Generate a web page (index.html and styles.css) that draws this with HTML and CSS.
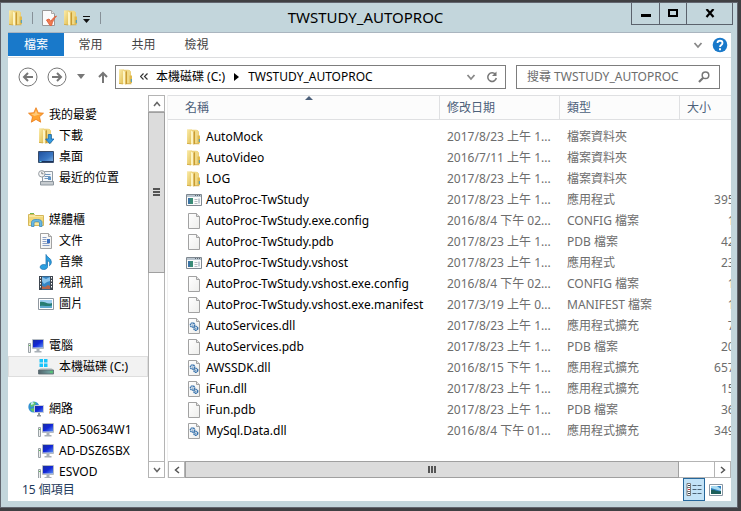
FILE: index.html
```html
<!DOCTYPE html>
<html lang="zh-Hant">
<head>
<meta charset="utf-8">
<title>TWSTUDY_AUTOPROC</title>
<link rel="stylesheet" href="styles.css">
</head>
<body>
<svg class="sprite" aria-hidden="true">
  <defs>
    <linearGradient id="gold" x1="0" x2="1" y1="0" y2="1"><stop offset="0" stop-color="#fbecaa"/><stop offset="1" stop-color="#e0bd50"/></linearGradient>
    <linearGradient id="paper" x1="0" x2="1" y1="0" y2="1"><stop offset="0" stop-color="#fff"/><stop offset="1" stop-color="#eeeeec"/></linearGradient>
    <linearGradient id="screen" x1="0" x2="1" y1="0" y2="1"><stop offset="0" stop-color="#1a2f9c"/><stop offset=".5" stop-color="#1226d8"/><stop offset="1" stop-color="#5c8ff0"/></linearGradient>
    <linearGradient id="desk" x1="0" x2="1" y1="0" y2="1"><stop offset="0" stop-color="#1f4f9c"/><stop offset=".6" stop-color="#3b78c4"/><stop offset="1" stop-color="#8ab8e4"/></linearGradient>
    <linearGradient id="steel" x1="0" x2="1" y1="0" y2="0"><stop offset="0" stop-color="#53636b"/><stop offset=".7" stop-color="#6d9c9c"/><stop offset="1" stop-color="#5fae86"/></linearGradient>
  </defs>
  <symbol id="folder" viewBox="0 0 16 16"><path d="M1 .8h9.500l2.500 1.700V15H1z" fill="#ecd07a"/><path d="M1 .5h5v14.200L1 14z" fill="url(#gold)"/><path d="M5 1.500 7.500 3v12.800L5 14.500z" fill="#fdf4c4"/><path d="M7.500 3 9 2v13l-1.500.8z" fill="#c99b31"/><path d="M9 1h3v13.500H9z" fill="#f0d987"/><path d="M11.500 6.500h2.500V14h-2.500z" fill="#e0b94c"/><path d="M13.300 10v3" stroke="#3d9bd0" stroke-width="1"/><path d="M1 14.300 5 15m4-.2h4.500" stroke="#c9a13a" stroke-width=".7"/></symbol>
  <symbol id="doc" viewBox="0 0 16 16"><path d="M2.500.5h8l3 3v12h-11z" fill="url(#paper)" stroke="#a2a2a2"/><path d="M10.500.5v3h3" fill="#e4e4e4" stroke="#a2a2a2"/></symbol>
  <symbol id="dll" viewBox="0 0 16 16"><use href="#doc"/><g fill="none" stroke="#3973ad" stroke-width="1.500"><circle cx="6.500" cy="7" r="2.100" stroke-dasharray="1.500 .4"/><circle cx="9.800" cy="10.300" r="1.900" stroke-dasharray="1.500 .4"/></g><circle cx="6.500" cy="7" r=".6" fill="#3973ad"/><circle cx="9.800" cy="10.300" r=".6" fill="#3973ad"/></symbol>
  <symbol id="app" viewBox="0 0 16 16"><path d="M.5 2.500h15v11H.5z" fill="#fbfbfb" stroke="#7f8890"/><path d="M1 3h14v2H1z" fill="#b9c5cf"/><path d="M9 3.500h1m1 0h1m1 0h1" stroke="#5d6872"/><path d="M2 6h5v6H2z" fill="#3b8c77"/><path d="M2 6h2v6H2z" fill="#3a73a3"/><path d="M8.500 7.500h3m-3 2h3m-3 2h3" stroke="#b6bcc1"/><path d="M13 6.500v5" stroke="#8ba0b1"/></symbol>
  <symbol id="star" viewBox="0 0 16 16"><path d="m8 .7 2.200 5 5.300.5-4 3.600 1.200 5.400L8 12.400l-4.700 2.800 1.200-5.400-4-3.600 5.300-.5z" fill="#ffa32f" stroke="#ea7b1b" stroke-width=".8"/><path d="m8 3 1.500 3.700 3.500.4-6.500 2L3 7l3.500-.4z" fill="#ffc978"/></symbol>
  <symbol id="download" viewBox="0 0 16 16"><use href="#folder"/><path d="M10.300 6.500h3v4.500H16l-4.200 4.700L7.600 11h2.700z" fill="#359be0" stroke="#1766ad" stroke-width=".8"/></symbol>
  <symbol id="desktop" viewBox="0 0 16 16"><path d="M.5 2.500h15v11H.5z" fill="url(#desk)" stroke="#374b6a"/><path d="M1 12.500h14" stroke="#18325c"/><path d="M1.500 12.500h2" stroke="#63d0e8"/></symbol>
  <symbol id="recent" viewBox="0 0 16 16"><path d="M4.500 1.500h10v10h-10z" fill="#f4f7fa" stroke="#929ba3"/><path d="M6.500 4.500h6m-6 2h6m-6 2h4" stroke="#7196bd"/><path d="M10 7h3v3h-3z" fill="#5b93c8"/><path d="M2.500 11.500h13v3.500h-13z" fill="#c6cbcf" stroke="#8d969e"/><circle cx="3.800" cy="3.800" r="3.200" fill="#f5f5f5" stroke="#969ca2"/><path d="M3.800 1.800v2h1.700" fill="none" stroke="#5e656b" stroke-width=".8"/></symbol>
  <symbol id="library" viewBox="0 0 16 16"><path d="M.5 2.500h6l1 1h8v10H.5z" fill="#f7e7a0" stroke="#d4b75a"/><path d="M2 1.500h4" stroke="#72b44c"/><path d="M1 5h14v6H1z" fill="#f2d778"/><path d="M3.500 14.500v-4c0-2 1.500-3 4.500-3h1.500c3 0 4.500 1 4.500 3v4h-2.500V11c0-.8-.8-1.300-2.700-1.300S6 10.200 6 11v3.500z" fill="#68b9e4" stroke="#3c89bd" stroke-width=".8"/></symbol>
  <symbol id="text" viewBox="0 0 16 16"><use href="#doc"/><path d="M4.500 4.500h4m-4 2h4m-4 2h4m-4 2h7m-7 2h7" stroke="#8a9fc4"/><path d="M9 6h3v4H9z" fill="#396fc0"/></symbol>
  <symbol id="music" viewBox="0 0 16 16"><path d="M8 .5c.5 2.800 5.500 3.500 5.300 7.500 0 1.800-1 3.200-1.800 3.700.8-2.700-.2-4.500-2-5.200v6.300c0 1.600-1.700 2.700-3.900 2.700-2 0-3.400-1-3.400-2.400 0-1.500 1.500-2.600 3.500-2.600.8 0 1.600.2 2.300.6z" fill="#2ba0e1" stroke="#2075b2" stroke-width=".8"/></symbol>
  <symbol id="video" viewBox="0 0 16 16"><path d="M1 1h14v14H1z" fill="#3e4650"/><path d="M4 1.500h8v13H4z" fill="#3585c4"/><path d="m4 2 4 2 4-2v4l-3 1-3 2-2-3z" fill="#8bc4ec"/><path d="m4 11 3 1 3-2 2 1v3H4z" fill="#b8654a"/><path d="M2.500 2v12m11-12v12" stroke="#fff" stroke-width="1" stroke-dasharray="1.500 1.500"/></symbol>
  <symbol id="picture" viewBox="0 0 16 16"><path d="M.5 2.500h15v11H.5z" fill="#fff" stroke="#8f979f"/><path d="M2 4h12v4H2z" fill="#9ccdf0"/><path d="M2 6c5-1 7 3 12 1v5H2z" fill="#277d73"/><path d="M2 10c5-1 7 1 12-.5V12H2z" fill="#5fa9cf"/></symbol>
  <symbol id="computer" viewBox="0 0 16 16"><path d="M4.500 1.500h11v9h-11z" fill="#dbe0e6" stroke="#b4bbc3"/><path d="M5 2h10v7.500H5z" fill="url(#screen)"/><path d="M8.500 11h3v2h-3zM6.500 13h7v1.500h-7z" fill="#aab1b8"/><path d="M.5 5.500h2v9h-2z" fill="#eceeef" stroke="#9aa2a6"/><path d="M1 7.500h1.500" stroke="#60b85b"/></symbol>
  <symbol id="drive" viewBox="0 0 16 16"><path d="M1.500 0h3.500v3.500H1.500zM6 0h3.500v3.500H6zM1.500 4.500H5V8H1.500zM6 4.500h3.500V8H6z" fill="#18c4fa"/><path d="m2.500 9h11l2 2H.5z" fill="#c9d0d2"/><path d="M.5 11h15v4H.5z" fill="url(#steel)" stroke="#5b6a70" stroke-width=".8"/><path d="M12 13h2.500" stroke="#49e25b"/></symbol>
  <symbol id="network" viewBox="0 0 16 16"><circle cx="5.800" cy="6" r="5.500" fill="#3191d2"/><path d="M2 3c2-3 5-2 6-1L6 5 3 6zm0 5 4-1 2 2-3 2z" fill="#62c468"/><path d="M3 1.500 5 1l1 2-3 1z" fill="#c7ecf7"/><path d="M6.500 4.500h9v7h-9z" fill="url(#screen)" stroke="#c6cdd8"/><path d="M10 12h2v2h-2zm-1 2h4v1.500H9z" fill="#8d979e"/></symbol>
  <symbol id="check" viewBox="0 0 16 16"><path d="M1.500.5h9l3 3v12h-12z" fill="#fbfbfb" stroke="#999"/><path d="M10.500.5v3h3" fill="#e5e5e5" stroke="#aaa"/><path d="m5.500 10 2.500-1 2 2.500c1-2.500 3-4.500 5.500-5.500-2.500 2.500-4 5.500-5 9.500H9z" fill="#ef7b50" stroke="#df6540"/></symbol>
  <symbol id="chev-down" viewBox="0 0 16 16"><path d="m4.500 6 3.500 4 3.500-4" fill="none" stroke="currentColor" stroke-width="1.800"/></symbol>
</svg>

<div class="window">
  <header class="titlebar">
    <div class="quick">
      <svg class="icon"><use href="#folder"/></svg>
      <span class="divider"></span>
      <button aria-label="內容"><svg class="icon"><use href="#check"/></svg></button>
      <button aria-label="新增資料夾"><svg class="icon"><use href="#folder"/></svg></button>
      <button class="customize" aria-label="自訂快速存取工具列"><svg width="7" height="7" viewBox="0 0 7 7"><path d="M0 0h7v1H0zM0 3h7L3.500 7z" fill="#111"/></svg></button>
      <span class="divider"></span>
    </div>
    <h1>TWSTUDY_AUTOPROC</h1>
    <div class="captions">
      <button aria-label="最小化"><svg width="12" height="10" viewBox="0 0 12 10"><path d="M1 5h10v3H1z"/></svg></button>
      <button aria-label="最大化"><svg width="12" height="10" viewBox="0 0 12 10"><path d="M2 1h8v6H2z" fill="none" stroke="#000" stroke-width="2"/></svg></button>
      <button class="close" aria-label="關閉"><svg width="12" height="10" viewBox="0 0 12 10"><path d="m2.500 0 7 8m0-8-7 8" stroke="#000" stroke-width="2.200"/></svg></button>
    </div>
  </header>

  <div class="client">
    <nav class="ribbon">
      <button class="file">檔案</button>
      <button>常用</button>
      <button>共用</button>
      <button>檢視</button>
      <span class="spacer"></span>
      <button class="tool" aria-label="展開功能區"><svg class="icon muted"><use href="#chev-down"/></svg></button>
      <button class="tool" aria-label="說明"><svg class="icon" viewBox="0 0 16 16"><circle cx="8" cy="8" r="7.300" fill="#1979ca"/><path d="M5.500 6c0-3 5-3 5 0 0 2-2.500 2-2.500 4" fill="none" stroke="#fff" stroke-width="1.800"/><path d="M7 11.200h2v2H7z" fill="#fff"/></svg></button>
    </nav>

    <div class="address-row">
      <button class="round" aria-label="上一頁"><svg width="20" height="20" viewBox="0 0 20 20"><circle cx="10" cy="10" r="9" fill="none" stroke="#777"/><path d="M15 10H6m4-4-4 4 4 4" fill="none" stroke="#777" stroke-width="2"/></svg></button>
      <button class="round" aria-label="下一頁"><svg width="20" height="20" viewBox="0 0 20 20"><circle cx="10" cy="10" r="9" fill="none" stroke="#777"/><path d="M5 10h9m-4-4 4 4-4 4" fill="none" stroke="#777" stroke-width="2"/></svg></button>
      <button class="history" aria-label="最近的位置"><svg width="8" height="5" viewBox="0 0 8 5"><path d="M0 0h8L4 5z" fill="#777"/></svg></button>
      <button class="up" aria-label="上一層"><svg width="10" height="12" viewBox="0 0 10 12"><path d="M5 12V2M1 6l4-4 4 4" fill="none" stroke="#777" stroke-width="2"/></svg></button>
      <div class="address">
        <svg class="icon"><use href="#folder"/></svg>
        <svg class="crumb-more" width="8" height="7" viewBox="0 0 8 7"><path d="M3.500.5l-3 3 3 3m4-6-3 3 3 3" fill="none" stroke="#333" stroke-width="1.200"/></svg>
        <a href="#c">本機磁碟 (C:)</a>
        <svg class="crumb-arrow" width="5" height="8" viewBox="0 0 5 8"><path d="M0 0v8l5-4z"/></svg>
        <a href="#here">TWSTUDY_AUTOPROC</a>
        <span class="spacer"></span>
        <svg class="icon muted"><use href="#chev-down"/></svg>
        <button class="refresh" aria-label="重新整理"><svg width="12" height="12" viewBox="0 0 12 12"><path d="M9.500 3.500A4.300 4.300 0 1 0 10.300 7" fill="none" stroke="#777" stroke-width="1.500"/><path d="M10.500.5v4.500H6z" fill="#777"/></svg></button>
      </div>
      <label class="search">
        <input type="search" aria-label="搜尋" placeholder="搜尋 TWSTUDY_AUTOPROC">
        <svg width="12" height="12" viewBox="0 0 12 12"><circle cx="7.500" cy="4.300" r="3.300" fill="none" stroke="#777" stroke-width="1.500"/><path d="m5.200 6.800-4.200 4.200" stroke="#777" stroke-width="2.200"/></svg>
      </label>
    </div>

    <div class="panes">
      <nav class="tree">
        <ul>
          <li><a href="#fav"><svg class="icon"><use href="#star"/></svg>我的最愛</a></li>
          <li class="child"><a href="#dl"><svg class="icon"><use href="#download"/></svg>下載</a></li>
          <li class="child"><a href="#dt"><svg class="icon"><use href="#desktop"/></svg>桌面</a></li>
          <li class="child"><a href="#rc"><svg class="icon"><use href="#recent"/></svg>最近的位置</a></li>
        </ul>
        <ul>
          <li><a href="#lib"><svg class="icon"><use href="#library"/></svg>媒體櫃</a></li>
          <li class="child"><a href="#doc1"><svg class="icon"><use href="#text"/></svg>文件</a></li>
          <li class="child"><a href="#mus"><svg class="icon"><use href="#music"/></svg>音樂</a></li>
          <li class="child"><a href="#vid"><svg class="icon"><use href="#video"/></svg>視訊</a></li>
          <li class="child"><a href="#pic"><svg class="icon"><use href="#picture"/></svg>圖片</a></li>
        </ul>
        <ul>
          <li><a href="#pc"><svg class="icon"><use href="#computer"/></svg>電腦</a></li>
          <li class="child selected"><a href="#c"><svg class="icon"><use href="#drive"/></svg>本機磁碟 (C:)</a></li>
        </ul>
        <ul>
          <li><a href="#net"><svg class="icon"><use href="#network"/></svg>網路</a></li>
          <li class="child"><a href="#n1"><svg class="icon"><use href="#computer"/></svg>AD-50634W1</a></li>
          <li class="child"><a href="#n2"><svg class="icon"><use href="#computer"/></svg>AD-DSZ6SBX</a></li>
          <li class="child"><a href="#n3"><svg class="icon"><use href="#computer"/></svg>ESVOD</a></li>
        </ul>
      </nav>
      <div class="vscroll">
        <button aria-label="向上捲動"><svg width="8" height="6" viewBox="0 0 8 6"><path d="m1 5 3-3.500L7 5" fill="none" stroke="#666" stroke-width="1.500"/></svg></button>
        <div class="thumb"><svg width="7" height="8" viewBox="0 0 7 8"><path d="M0 1h7M0 4h7M0 7h7" stroke="#555" stroke-width="2"/></svg></div>
        <div class="track"></div>
        <button aria-label="向下捲動"><svg width="8" height="6" viewBox="0 0 8 6"><path d="m1 1 3 3.500L7 1" fill="none" stroke="#666" stroke-width="1.500"/></svg></button>
      </div>

      <main class="files">
        <div class="list">
          <table>
            <colgroup><col class="c-name"><col class="c-date"><col class="c-type"><col class="c-size"></colgroup>
            <thead>
              <tr><th class="sorted">名稱<svg class="sort" width="8" height="4" viewBox="0 0 8 4"><path d="M0 4h8L4 0z" fill="#4c607a"/></svg></th><th>修改日期</th><th>類型</th><th>大小</th></tr>
            </thead>
            <tbody>
              <tr><td><svg class="icon"><use href="#folder"/></svg>AutoMock</td><td>2017/8/23 上午 1...</td><td>檔案資料夾</td><td></td></tr>
              <tr><td><svg class="icon"><use href="#folder"/></svg>AutoVideo</td><td>2016/7/11 上午 1...</td><td>檔案資料夾</td><td></td></tr>
              <tr><td><svg class="icon"><use href="#folder"/></svg>LOG</td><td>2017/8/23 上午 1...</td><td>檔案資料夾</td><td></td></tr>
              <tr><td><svg class="icon"><use href="#app"/></svg>AutoProc-TwStudy</td><td>2017/8/23 上午 1...</td><td>應用程式</td><td>395 KB</td></tr>
              <tr><td><svg class="icon"><use href="#doc"/></svg>AutoProc-TwStudy.exe.config</td><td>2016/8/4 下午 02...</td><td>CONFIG 檔案</td><td>1 KB</td></tr>
              <tr><td><svg class="icon"><use href="#doc"/></svg>AutoProc-TwStudy.pdb</td><td>2017/8/23 上午 1...</td><td>PDB 檔案</td><td>42 KB</td></tr>
              <tr><td><svg class="icon"><use href="#app"/></svg>AutoProc-TwStudy.vshost</td><td>2017/8/23 上午 1...</td><td>應用程式</td><td>23 KB</td></tr>
              <tr><td><svg class="icon"><use href="#doc"/></svg>AutoProc-TwStudy.vshost.exe.config</td><td>2016/8/4 下午 02...</td><td>CONFIG 檔案</td><td>1 KB</td></tr>
              <tr><td><svg class="icon"><use href="#doc"/></svg>AutoProc-TwStudy.vshost.exe.manifest</td><td>2017/3/19 上午 0...</td><td>MANIFEST 檔案</td><td>1 KB</td></tr>
              <tr><td><svg class="icon"><use href="#dll"/></svg>AutoServices.dll</td><td>2017/8/23 上午 1...</td><td>應用程式擴充</td><td>7 KB</td></tr>
              <tr><td><svg class="icon"><use href="#doc"/></svg>AutoServices.pdb</td><td>2017/8/23 上午 1...</td><td>PDB 檔案</td><td>20 KB</td></tr>
              <tr><td><svg class="icon"><use href="#dll"/></svg>AWSSDK.dll</td><td>2016/8/15 下午 1...</td><td>應用程式擴充</td><td>657 KB</td></tr>
              <tr><td><svg class="icon"><use href="#dll"/></svg>iFun.dll</td><td>2017/8/23 上午 1...</td><td>應用程式擴充</td><td>15 KB</td></tr>
              <tr><td><svg class="icon"><use href="#doc"/></svg>iFun.pdb</td><td>2017/8/23 上午 1...</td><td>PDB 檔案</td><td>36 KB</td></tr>
              <tr><td><svg class="icon"><use href="#dll"/></svg>MySql.Data.dll</td><td>2016/8/4 下午 01...</td><td>應用程式擴充</td><td>349 KB</td></tr>
            </tbody>
          </table>
        </div>
        <div class="hscroll">
          <button aria-label="向左捲動"><svg width="6" height="8" viewBox="0 0 6 8"><path d="M5 1 1.500 4 5 7" fill="none" stroke="#555" stroke-width="1.500"/></svg></button>
          <div class="thumb"><svg width="8" height="7" viewBox="0 0 8 7"><path d="M1 0v7M4 0v7M7 0v7" stroke="#555" stroke-width="2"/></svg></div>
          <div class="track"></div>
          <button aria-label="向右捲動"><svg width="6" height="8" viewBox="0 0 6 8"><path d="m1 1 3.500 3L1 7" fill="none" stroke="#555" stroke-width="1.500"/></svg></button>
        </div>
      </main>
    </div>

    <footer class="status">
      <span class="count">15 個項目</span>
      <span class="spacer"></span>
      <button class="active" aria-label="詳細資料"><svg width="16" height="13" viewBox="0 0 16 13"><path d="M1 .5h3.500v12H1zM1 4.500h3.500M1 8.500h3.500" fill="#fff" stroke="#777"/><path d="M2 2.500h2" stroke="#345"/><path d="M2 6.500h2" stroke="#c33"/><path d="M2 10.500h2" stroke="#345"/><path d="M6.500 2.500h4m1 0h4m-9 4h4m1 0h4m-9 4h4m1 0h4" stroke="#4b6274"/></svg></button>
      <button aria-label="大圖示"><svg width="14" height="12" viewBox="0 0 14 12"><path d="M.5.5h13v11H.5z" fill="#fff" stroke="#8997a4"/><path d="M2 2h10v8H2z" fill="#2f80c2"/><path d="M2 2h6l4 3v2L2 4z" fill="#a8dbf2"/><path d="M2 6c4-1 5 2 10 1v3H2z" fill="#1d5f5a"/></svg></button>
    </footer>
  </div>
</div>
</body>
</html>
```
FILE: styles.css
```css
* { box-sizing: border-box; }

body {
  margin: 0;
  height: 100vh;
  padding: 2px 3px 3px 0;
  background: #404043;
  color: #000;
  font: 12px/20px "Noto Sans", "Noto Sans CJK TC", sans-serif;
}

button {
  display: flex;
  align-items: center;
  justify-content: center;
  margin: 0;
  padding: 0;
  border: 0;
  background: none;
  color: inherit;
  font: inherit;
}

a { color: inherit; text-decoration: none; }
ul { margin: 0; padding: 0; list-style: none; }
svg { display: block; flex: none; }
.sprite { position: absolute; width: 0; height: 0; }
.icon { width: 16px; height: 16px; }
.muted { color: #888; }
.spacer { flex: 1; }

.window {
  display: flex;
  flex-direction: column;
  height: 100%;
  padding: 0 6px 6px 7px;
  border: 1px solid #62666f;
  background: #c3d6dc;
}

/* Title bar */
.titlebar {
  display: grid;
  grid-template-columns: 1fr auto 1fr;
  height: 30px;
  border-bottom: 1px solid #aab5bf;
}

.quick { display: flex; align-items: center; gap: 8px; }
.quick .divider { width: 1px; height: 12px; background: #879198; }
.quick button + button { margin-left: -2px; }
.quick .customize { margin: 3px 2px 0 -4px; }

.titlebar h1 {
  margin: 0 8px 0 0;
  font-size: 15px;
  font-weight: 400;
  line-height: 28px;
}

.captions {
  display: flex;
  justify-self: end;
  align-self: start;
  height: 22px;
  margin-right: -2px;
  border: 1px solid #5b626c;
  border-top: 0;
}
.captions button { width: 27px; }
.captions button + button { border-left: 1px solid #5b626c; }
.captions .close { width: 46px; }

.client {
  display: flex;
  flex: 1;
  flex-direction: column;
  min-height: 0;
  background: #fff;
}

/* Ribbon tabs */
.ribbon {
  display: flex;
  height: 25px;
  border-bottom: 1px solid #dcdddf;
  color: #444;
}
.ribbon button { width: 53px; }
.ribbon .file { width: 56px; margin-bottom: 1px; background: #1979ca; color: #fff; }
.ribbon .tool { width: 22px; }

/* Address row */
.address-row {
  display: flex;
  align-items: center;
  height: 37px;
  padding: 0 11px 0 10px;
}
.round { margin-right: 9px; }
.history { width: 10px; }
.up { width: 16px; margin: 0 4px 0 9px; }

.address,
.search {
  display: flex;
  align-items: center;
  height: 24px;
  border: 1px solid #7d7d7d;
  background: #fff;
}
.address { flex: 1; padding-left: 2px; }
.crumb-more { margin: 0 8px 0 6px; }
.crumb-arrow { margin: 0 9px; }
.refresh { width: 26px; }
.search { width: 204px; margin-left: 10px; padding: 0 9px 0 10px; }
.search input {
  flex: 1;
  min-width: 0;
  padding: 0;
  border: 0;
  outline: 0;
  background: none;
  font: inherit;
}
.search input::placeholder { color: #6d6d6d; opacity: 1; }

/* Panes */
.panes { display: flex; flex: 1; min-height: 0; }

.tree { width: 140px; padding-top: 9px; overflow: hidden; }
.tree ul { margin-bottom: 21px; }
.tree li { height: 21px; padding-left: 19px; border: 1px solid transparent; }
.tree li.child { padding-left: 29px; }
.tree li.selected { border-color: #dedede; background: #f2f2f2; }
.tree a { display: flex; align-items: center; gap: 5px; height: 19px; white-space: nowrap; }

.vscroll,
.hscroll { display: flex; }
.vscroll { flex-direction: column; width: 17px; }
.hscroll { height: 17px; }

.vscroll button,
.hscroll button { border: 1px solid #b4b4b4; background: #fff; }
.vscroll button { height: 17px; }
.hscroll button { width: 17px; }

.thumb {
  display: flex;
  align-items: center;
  justify-content: center;
  border: 1px solid #a0a0a0;
  background: #dcdcdc;
}
.vscroll .thumb { flex: 160; }
.vscroll .track { flex: 190; border: solid #b4b4b4; border-width: 0 1px; }
.hscroll .thumb { flex: 495; }
.hscroll .track { flex: 35; border: solid #b4b4b4; border-width: 1px 0; }

.files {
  display: flex;
  flex: 1;
  flex-direction: column;
  min-width: 0;
  margin-left: 2px;
  border-left: 1px solid #f0f0f0;
}
.list { flex: 1; overflow: hidden; }

table { width: 592px; table-layout: fixed; border-spacing: 0; white-space: nowrap; }
.c-name { width: 272px; }
.c-date, .c-type { width: 120px; }

th {
  height: 25px;
  padding: 0 7px;
  border: solid #dfe0e2;
  border-width: 1px 1px 1px 0;
  background: #fcfcfc;
  color: #4c607a;
  font-weight: 400;
  text-align: left;
}
th:first-child { padding-left: 17px; }
.sorted { position: relative; }
.sort { position: absolute; top: 0; left: calc(50% + 1px); }

tbody::before { content: ""; display: block; height: 6px; }
td { height: 21px; padding: 0 7px; color: #6d6d6d; line-height: 20px; }
td:first-child { padding-left: 18px; color: #000; }
td:last-child { text-align: right; }
td .icon { display: inline-block; margin-right: 4px; vertical-align: middle; }

/* Status bar */
.status { display: flex; height: 23px; padding-right: 4px; color: #1e395b; }
.count { margin-left: 14px; line-height: 23px; }
.status button { width: 22px; }
.status .active { border: 1px solid #26689c; background: #c3e3f7; }
```
